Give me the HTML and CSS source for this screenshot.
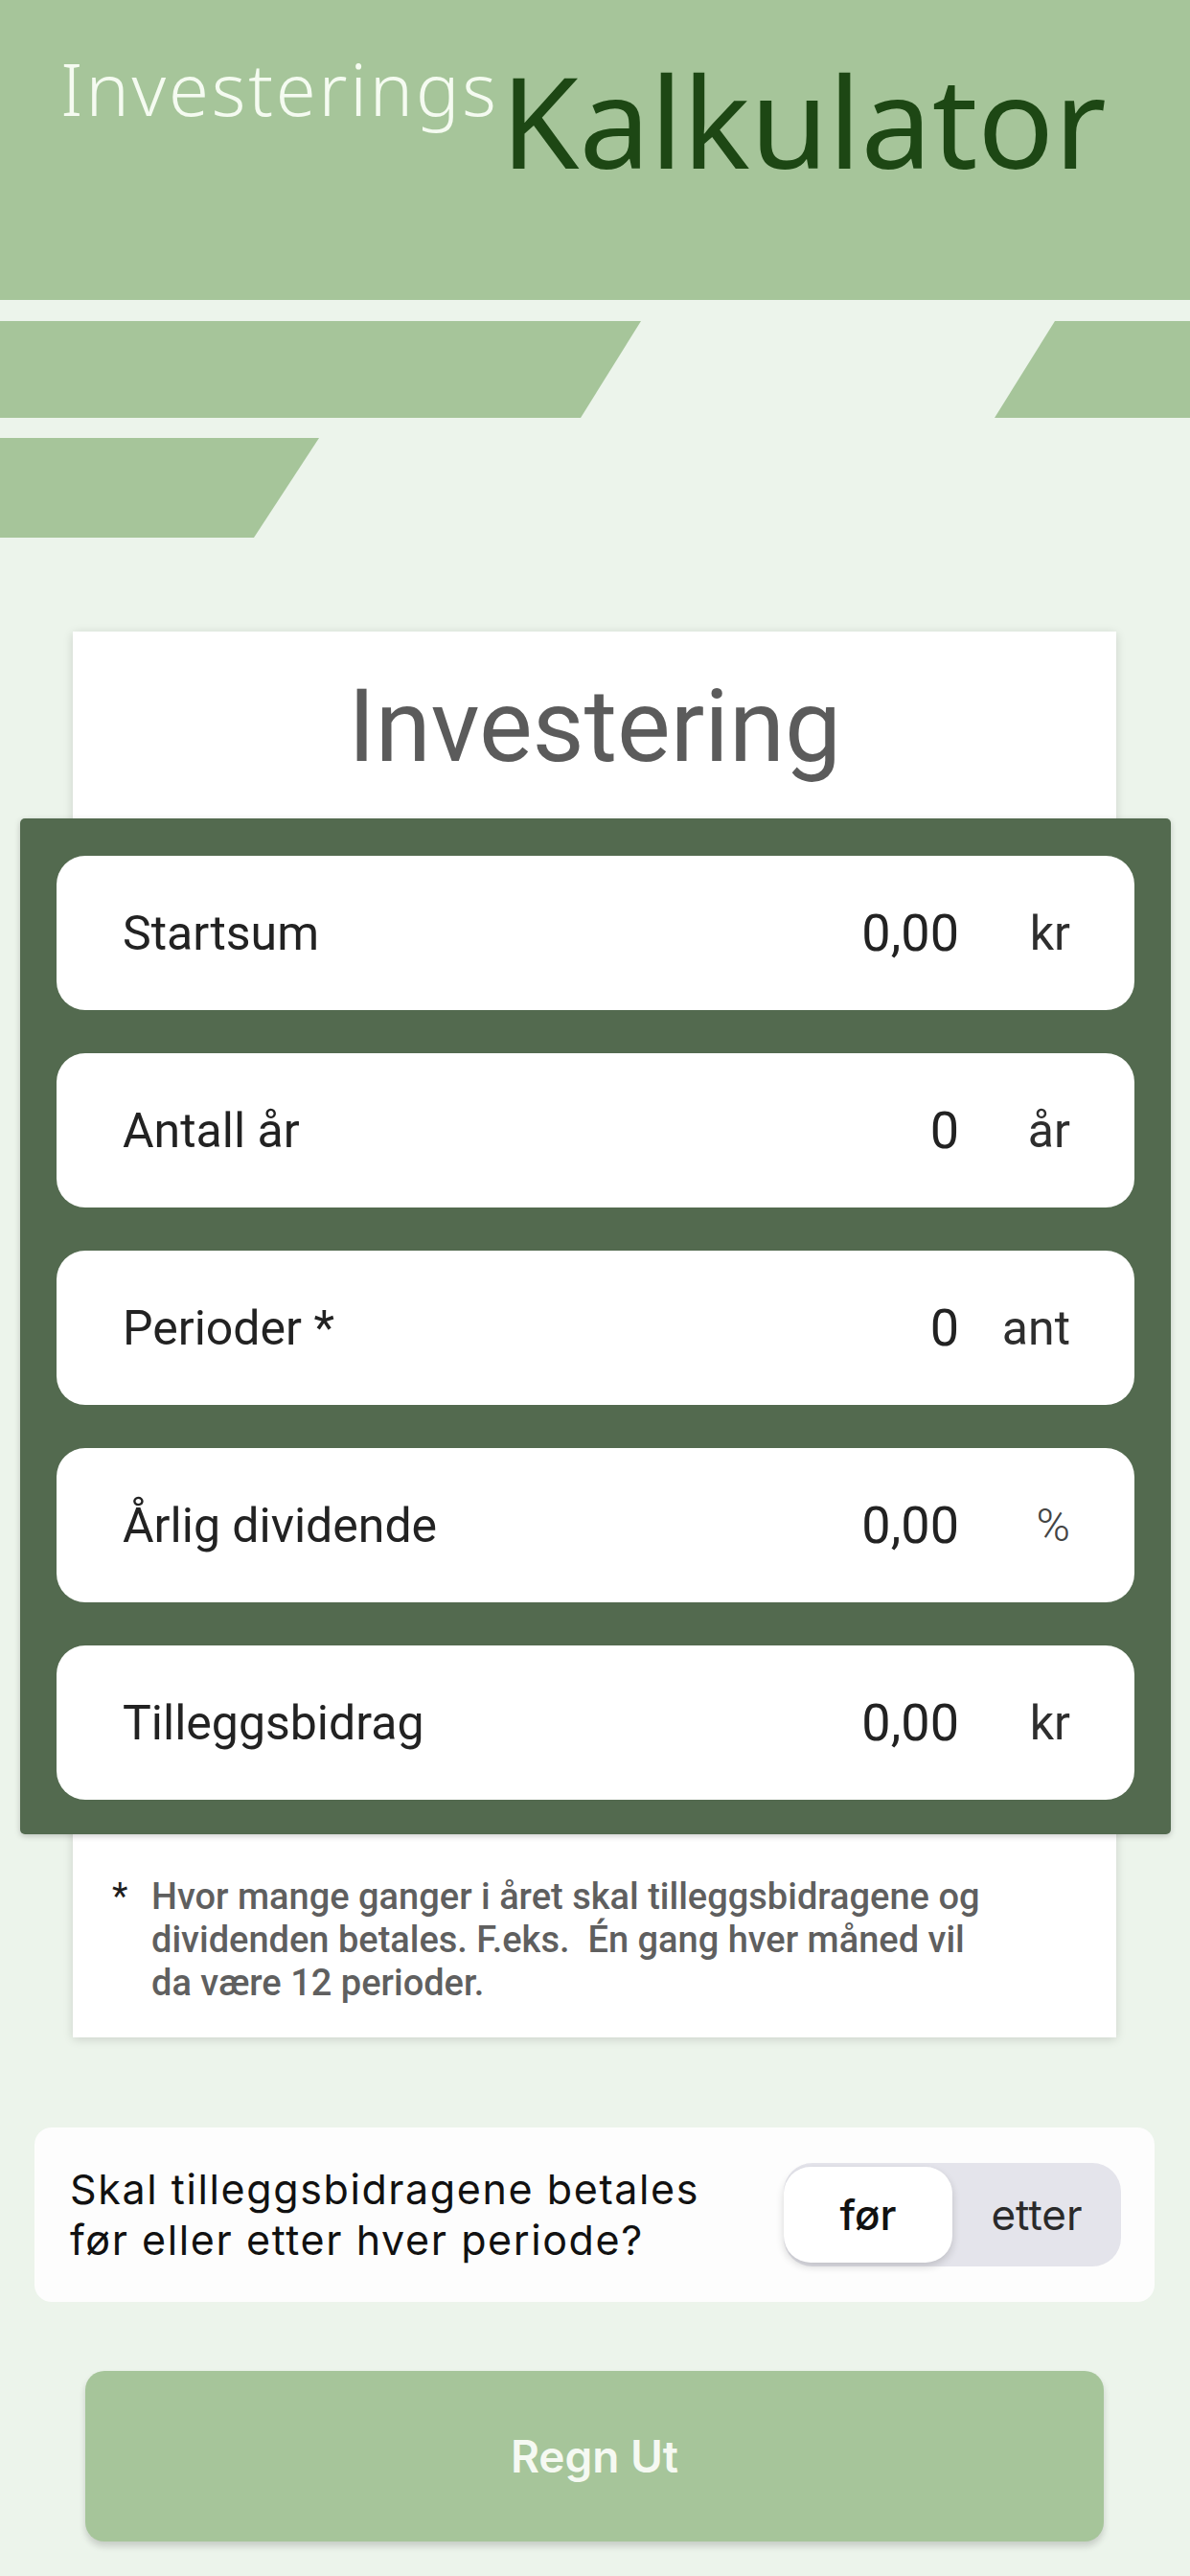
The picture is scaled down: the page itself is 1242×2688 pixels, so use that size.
FILE: index.html
```html
<!DOCTYPE html>
<html lang="no">
<head>
<meta charset="utf-8">
<title>InvesteringsKalkulator</title>
<link rel="stylesheet" href="styles.css">
</head>
<body>
<header class="header">
  <span class="brand-light">Investerings</span><span class="brand-dark">Kalkulator</span>
</header>
<div class="stripes">
  <div class="stripe stripe-1">
    <div class="piece piece-left-1"></div>
    <div class="piece piece-right-1"></div>
  </div>
  <div class="stripe stripe-2">
    <div class="piece piece-left-2"></div>
  </div>
</div>
<main class="content">
  <section class="card">
    <h1 class="card-title">Investering</h1>
    <div class="panel">
      <div class="row"><span class="label">Startsum</span><span class="value">0,00</span><span class="unit">kr</span></div>
      <div class="row"><span class="label">Antall år</span><span class="value">0</span><span class="unit">år</span></div>
      <div class="row"><span class="label">Perioder *</span><span class="value">0</span><span class="unit">ant</span></div>
      <div class="row"><span class="label">Årlig dividende</span><span class="value">0,00</span><span class="unit unit-small">%</span></div>
      <div class="row"><span class="label">Tilleggsbidrag</span><span class="value">0,00</span><span class="unit">kr</span></div>
    </div>
    <div class="note">
      <span class="note-star">*</span>
      <p class="note-text">Hvor mange ganger i året skal tilleggsbidragene og<br>dividenden betales. F.eks. &nbsp;Én gang hver måned vil<br>da være 12 perioder.</p>
    </div>
  </section>
  <section class="timing">
    <p class="timing-question">Skal tilleggsbidragene betales<br>før eller etter hver periode?</p>
    <div class="segmented">
      <span class="segment segment-active">før</span>
      <span class="segment">etter</span>
    </div>
  </section>
  <button class="calc-button" type="button">Regn Ut</button>
</main>
</body>
</html>
```
FILE: styles.css
```css
html, body {
  margin: 0;
  padding: 0;
}
body {
  width: 1242px;
  min-height: 2688px;
  background: #ecf4eb;
  font-family: Roboto, "Liberation Sans", sans-serif;
  overflow: hidden;
}

/* Header */
.header {
  height: 313px;
  box-sizing: border-box;
  background: #a6c59a;
  display: flex;
  align-items: flex-start;
  padding: 54px 0 0 63px;
  font-family: "Noto Sans", "Open Sans", sans-serif;
}
.brand-light {
  font-size: 76px;
  line-height: 76px;
  font-weight: 300;
  letter-spacing: 2.8px;
  color: #f5fbf1;
}
.brand-dark {
  font-size: 132px;
  line-height: 132px;
  color: #1d4714;
  margin-top: 5px;
  margin-left: 2px;
}

/* Decorative stripes */
.stripes {
  display: flex;
  flex-direction: column;
  gap: 21px;
  margin-top: 22px;
}
.stripe {
  display: flex;
  justify-content: space-between;
}
.stripe-1 { height: 101px; }
.stripe-2 { height: 104px; }
.piece { background: #a6c59a; height: 100%; }
.piece-left-1 {
  width: 669px;
  clip-path: polygon(0 0, 100% 0, calc(100% - 63px) 100%, 0 100%);
}
.piece-right-1 {
  width: 204px;
  clip-path: polygon(63px 0, 100% 0, 100% 100%, 0 100%);
}
.piece-left-2 {
  width: 333px;
  clip-path: polygon(0 0, 100% 0, calc(100% - 68px) 100%, 0 100%);
}

/* Content */
.content {
  display: flex;
  flex-direction: column;
  padding-top: 98px;
}

.card {
  margin: 0 77px 0 76px;
  background: #ffffff;
  padding-top: 48px;
  box-shadow: 0 2px 10px rgba(0, 0, 0, 0.14);
}
.card-title {
  margin: 0 0 43px;
  text-align: center;
  font-size: 105px;
  line-height: 104px;
  font-weight: 400;
  color: #5b5b5b;
}

.panel {
  margin: 0 -57px 0 -55px;
  background: #536a4f;
  border-radius: 5px;
  padding: 39px 38px 36px;
  display: flex;
  flex-direction: column;
  gap: 45px;
  box-shadow: 0 2px 6px rgba(0, 0, 0, 0.2);
}
.row {
  height: 161px;
  background: #ffffff;
  border-radius: 30px;
  display: flex;
  align-items: center;
  padding: 0 67px 0 69px;
  color: #222222;
}
.label {
  flex: 1;
  font-size: 50px;
}
.value {
  font-size: 54px;
  margin-right: 36px;
}
.unit {
  min-width: 80px;
  text-align: right;
  font-size: 50px;
  color: #2e2e2e;
}
.unit-small {
  font-size: 48px;
  font-weight: 300;
  color: #444444;
}

.note {
  display: flex;
  padding: 43px 40px 34px 41px;
}
.note-star {
  width: 41px;
  flex: none;
  font-size: 38px;
  line-height: 45px;
  color: #1e1e1e;
}
.note-text {
  margin: 0;
  font-size: 38px;
  line-height: 45px;
  font-weight: 500;
  color: #5f5f5f;
}

/* Before/after section */
.timing {
  margin: 94px 37px 0 36px;
  height: 182px;
  box-sizing: border-box;
  background: #fdfdfd;
  border-radius: 18px;
  display: flex;
  align-items: center;
  justify-content: space-between;
  padding: 0 35px 0 37px;
}
.timing-question {
  margin: 0;
  font-family: Inter, Roboto, sans-serif;
  font-size: 43px;
  line-height: 53px;
  color: #111111;
  letter-spacing: 1.6px;
}
.segmented {
  width: 352px;
  height: 108px;
  box-sizing: border-box;
  background: #e4e4eb;
  border-radius: 30px;
  padding: 4px 0;
  display: flex;
  font-family: Inter, Roboto, sans-serif;
  font-size: 44px;
}
.segment {
  flex: 1;
  display: flex;
  align-items: center;
  justify-content: center;
  color: #2a2a2a;
  border-radius: 28px;
}
.segment-active {
  background: #ffffff;
  color: #111111;
  font-weight: 500;
  box-shadow: 0 4px 9px rgba(0, 0, 0, 0.16);
}

.calc-button {
  margin: 72px 90px 0 89px;
  height: 178px;
  border: none;
  border-radius: 20px;
  background: #a6c59a;
  color: #f5f9f2;
  font-family: Inter, Roboto, sans-serif;
  font-size: 46px;
  font-weight: 600;
  box-shadow: 0 5px 7px rgba(0, 0, 0, 0.16);
}
```
